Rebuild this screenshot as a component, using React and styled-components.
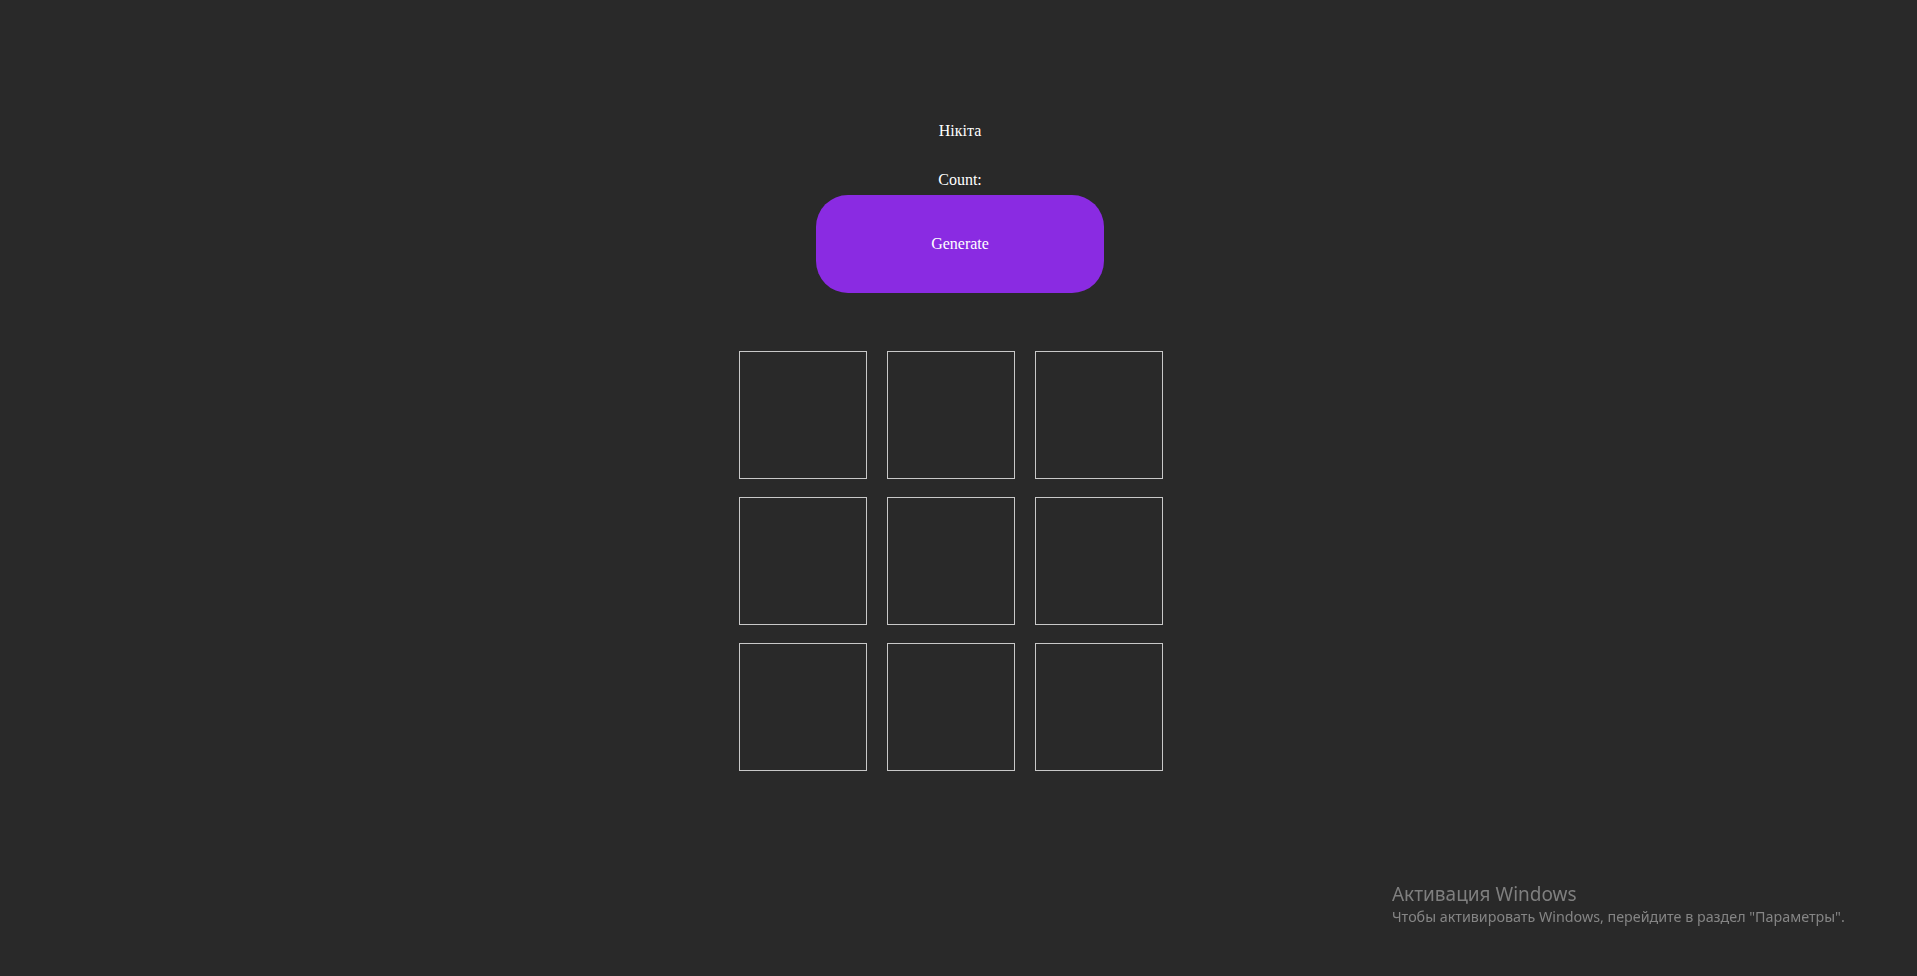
import React from "react";
import styled, { createGlobalStyle } from "styled-components";

const GlobalStyle = createGlobalStyle`
  html, body {
    margin: 0;
    padding: 0;
    background: #292929;
    overflow: hidden;
  }
  body {
    font-family: "Liberation Serif", "Times New Roman", serif;
    color: #ffffff;
  }
`;

const Page = styled.main`
  width: 1920px;
  display: flex;
  flex-direction: column;
  align-items: center;
  padding-top: 122px;
  box-sizing: border-box;
`;

const Label = styled.p`
  margin: 0 0 ${(p) => p.$gap}px;
  font-size: 16px;
  line-height: 18px;
  text-align: center;
`;

const GenerateButton = styled.button`
  width: 288px;
  height: 98px;
  border: none;
  border-radius: 32px;
  background: #8a2be2;
  color: #ffffff;
  font-family: "Liberation Serif", "Times New Roman", serif;
  font-size: 16px;
  cursor: pointer;
`;

const Board = styled.div`
  margin-top: 58px;
  margin-right: 18px;
  display: grid;
  grid-template-columns: repeat(3, 128px);
  grid-auto-rows: 128px;
  column-gap: 20px;
  row-gap: 18px;
`;

const Cell = styled.div`
  box-sizing: border-box;
  border: 1px solid #c8c8c8;
`;

const Watermark = styled.div`
  position: fixed;
  left: 1392px;
  top: 881px;
  font-family: "Noto Sans", "Open Sans", sans-serif;
  color: #7f7f7f;
  pointer-events: none;
`;

const WatermarkTitle = styled.div`
  font-size: 19px;
  line-height: 26px;
`;

const WatermarkText = styled.div`
  font-size: 14.3px;
  line-height: 20px;
  color: #858585;
`;

export default function App() {
  return (
    <>
      <GlobalStyle />
      <Page>
        <Label $gap={31}>Нікіта</Label>
        <Label $gap={6}>Count: </Label>
        <GenerateButton>Generate</GenerateButton>
        <Board>
          {Array.from({ length: 9 }).map((_, i) => (
            <Cell key={i} />
          ))}
        </Board>
      </Page>
      <Watermark>
        <WatermarkTitle>Активация Windows</WatermarkTitle>
        <WatermarkText>
          Чтобы активировать Windows, перейдите в раздел "Параметры".
        </WatermarkText>
      </Watermark>
    </>
  );
}
